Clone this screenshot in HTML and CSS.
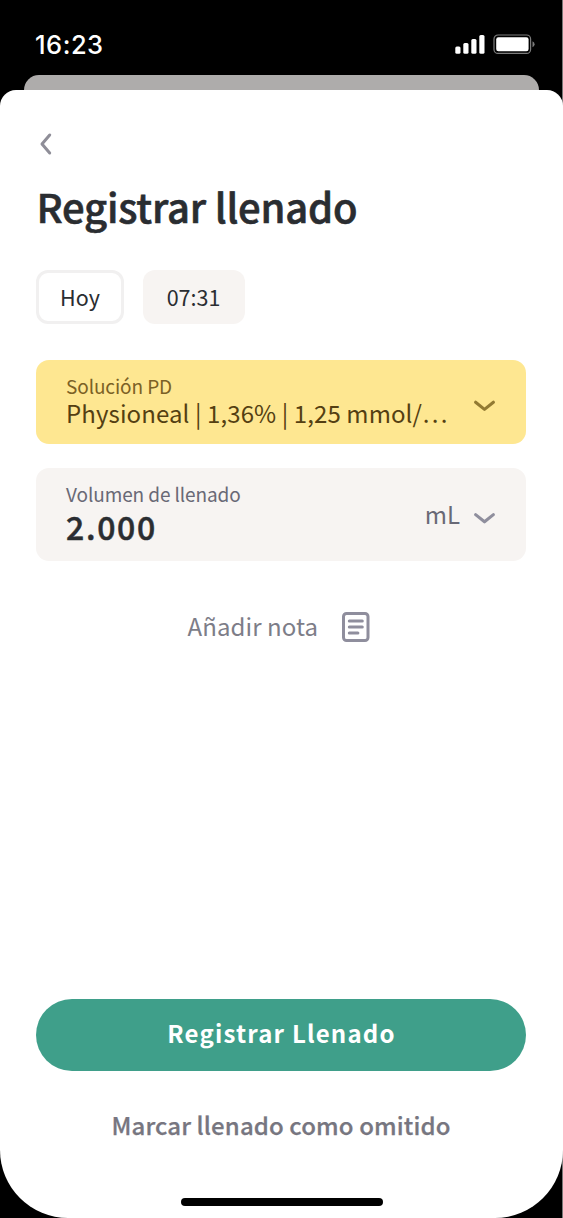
FILE: index.html
```html
<!DOCTYPE html>
<html lang="es">
<head>
<meta charset="utf-8">
<title>Registrar llenado</title>
<link rel="stylesheet" href="styles.css">
</head>
<body>
<div class="screen">
  <header class="status">
    <span class="clock">16:23</span>
    <svg class="indicators" width="82" height="22" viewBox="0 0 82 22">
      <g fill="#fff">
        <rect x="1.3" y="12.5" width="5.2" height="7.3" rx="1.5"/>
        <rect x="9.3" y="9" width="5.2" height="10.8" rx="1.5"/>
        <rect x="17.3" y="5" width="5.2" height="14.8" rx="1.5"/>
        <rect x="25.3" y="1" width="5.2" height="18.8" rx="1.5"/>
        <rect x="42.2" y="3.2" width="32.4" height="14" rx="2.2"/>
      </g>
      <rect x="40" y="1" width="36.6" height="18.4" rx="4" fill="none" stroke="#7c7c7c" stroke-width="1.2"/>
      <path d="M78.5 7.2q2.1.8 2.1 3t-2.1 3z" fill="#7c7c7c"/>
    </svg>
  </header>
  <div class="behind"></div>
  <main class="sheet">
    <button class="back" aria-label="Atrás">
      <svg width="14" height="24" viewBox="0 0 14 24"><path d="M11.7 3 4 12l7.7 9"/></svg>
    </button>
    <h1 class="title">Registrar llenado</h1>
    <div class="chips">
      <button class="chip chip-day">Hoy</button>
      <button class="chip chip-time">07:31</button>
    </div>
    <section class="field solution">
      <div class="field-body">
        <span class="label">Solución PD</span>
        <span class="value">Physioneal | 1,36% | 1,25 mmol/…</span>
      </div>
      <svg class="chevron" width="24" height="14" viewBox="0 0 24 14"><path d="m2.6 2.2 8.9 7.2 8.9-7.2"/></svg>
    </section>
    <section class="field volume">
      <div class="field-body">
        <span class="label">Volumen de llenado</span>
        <span class="amount">2.000</span>
      </div>
      <span class="unit">mL</span>
      <svg class="chevron" width="24" height="14" viewBox="0 0 24 14"><path d="m2.6 2.6 8.9 7.2 8.9-7.2"/></svg>
    </section>
    <button class="note">
      <span>Añadir nota</span>
      <svg width="28" height="30" viewBox="0 0 28 30">
        <rect x="1.5" y="1.5" width="24.5" height="27" rx="3"/>
        <path d="M7.3 9h13M7.3 15h13M7.3 21h8.6"/>
      </svg>
    </button>
    <footer class="actions">
      <button class="primary">Registrar Llenado</button>
      <button class="secondary">Marcar llenado como omitido</button>
      <div class="home"></div>
    </footer>
  </main>
</div>
</body>
</html>
```
FILE: styles.css
```css
* { box-sizing: border-box; }
body {
  margin: 0;
  font-family: "Noto Sans CJK SC", "Noto Sans", sans-serif;
  color: #2a2d31;
}
button {
  border: 0;
  padding: 0;
  background: none;
  font: inherit;
  color: inherit;
}
svg { display: block; flex: none; }
.screen {
  width: 563px;
  height: 1218px;
  display: flex;
  flex-direction: column;
  overflow: hidden;
  background: linear-gradient(90deg, #000 562px, #777 562px);
}
.status {
  height: 75px;
  flex: none;
  display: flex;
  justify-content: space-between;
  padding: 34px 27px 0 35px;
}
.clock {
  font: 500 25.5px/21px Inter, sans-serif;
  letter-spacing: 0.5px;
  color: #fff;
}
.behind {
  height: 15px;
  flex: none;
  margin: 0 24.5px 0 24px;
  border-radius: 15px 15px 0 0;
  background: #aeacab;
}
.sheet {
  flex: 1;
  display: flex;
  flex-direction: column;
  padding: 42px 37px 12px 36px;
  border-radius: 16px 16px 68px 68px;
  background: #fff;
}
.back { width: 14px; height: 24px; margin-left: 2px; }
.back path {
  fill: none;
  stroke: #8f8e98;
  stroke-width: 3;
  stroke-linecap: round;
  stroke-linejoin: round;
}
.title {
  margin: 26px 0 40px 0.5px;
  font-size: 40px;
  line-height: 48px;
  font-weight: 500;
  letter-spacing: -0.22px;
  -webkit-text-stroke: 0.6px;
  white-space: nowrap;
}
.chips { display: flex; gap: 19px; }
.chip {
  height: 54px;
  padding-bottom: 1px;
  border-radius: 12px;
  font-size: 21.5px;
  line-height: 53px;
}
.chip-day {
  width: 88px;
  border: 3px solid #f1f0f0;
  line-height: 47px;
}
.chip-time { width: 102px; padding-right: 1px; background: #f7f4f2; }
.field {
  display: flex;
  padding: 14px 30px 0;
  border-radius: 13px;
}
.field-body {
  flex: 1;
  display: flex;
  flex-direction: column;
  white-space: nowrap;
}
.label { font-size: 19px; line-height: 24px; letter-spacing: -0.1px; }
.value { font-size: 24px; line-height: 29px; letter-spacing: 0.1px; }
.chevron path {
  fill: none;
  stroke: currentColor;
  stroke-width: 3.1;
  stroke-linecap: round;
  stroke-linejoin: round;
}
.solution {
  height: 84px;
  margin-top: 36px;
  background: #fee791;
}
.solution .label { color: #7b6125; }
.solution .value { color: #543f12; }
.solution .chevron { margin-top: 26px; color: #927a32; }
.volume {
  height: 93px;
  margin-top: 24px;
  background: #f7f4f2;
}
.volume .label { color: #696976; }
.amount {
  font-size: 32px;
  line-height: 41px;
  font-weight: 500;
  letter-spacing: 1.7px;
  -webkit-text-stroke: 0.5px;
}
.unit {
  margin: 17px 13px 0 0;
  font-size: 24px;
  line-height: 29px;
  color: #696976;
}
.volume .chevron { margin-top: 30px; color: #8f8e9d; }
.volume .chevron, .solution .chevron { margin-right: -1px; }
.note {
  display: flex;
  align-self: flex-start;
  gap: 23.5px;
  margin: 51px 0 0 151.5px;
  font-size: 24px;
  line-height: 28px;
  letter-spacing: 0.1px;
  color: #7d7d88;
  white-space: nowrap;
}
.note svg { fill: none; stroke: #8f8e9d; stroke-width: 3; stroke-linecap: round; }
.actions {
  margin-top: auto;
  display: flex;
  flex-direction: column;
  align-items: center;
}
.primary {
  width: 490px;
  height: 72px;
  padding: 0 0 4px 1px;
  border-radius: 36px;
  background: #3f9f8a;
  color: #fff;
  font-size: 24px;
  line-height: 28px;
  font-weight: 700;
  letter-spacing: 1.2px;
}
.secondary {
  margin-top: 40px;
  font-size: 24px;
  line-height: 28px;
  font-weight: 500;
  letter-spacing: 0.1px;
  -webkit-text-stroke: 0.25px;
  color: #777680;
  white-space: nowrap;
}
.home {
  width: 202px;
  height: 8px;
  margin: 59px 0 0 2px;
  border-radius: 4px;
  background: #000;
}
```
